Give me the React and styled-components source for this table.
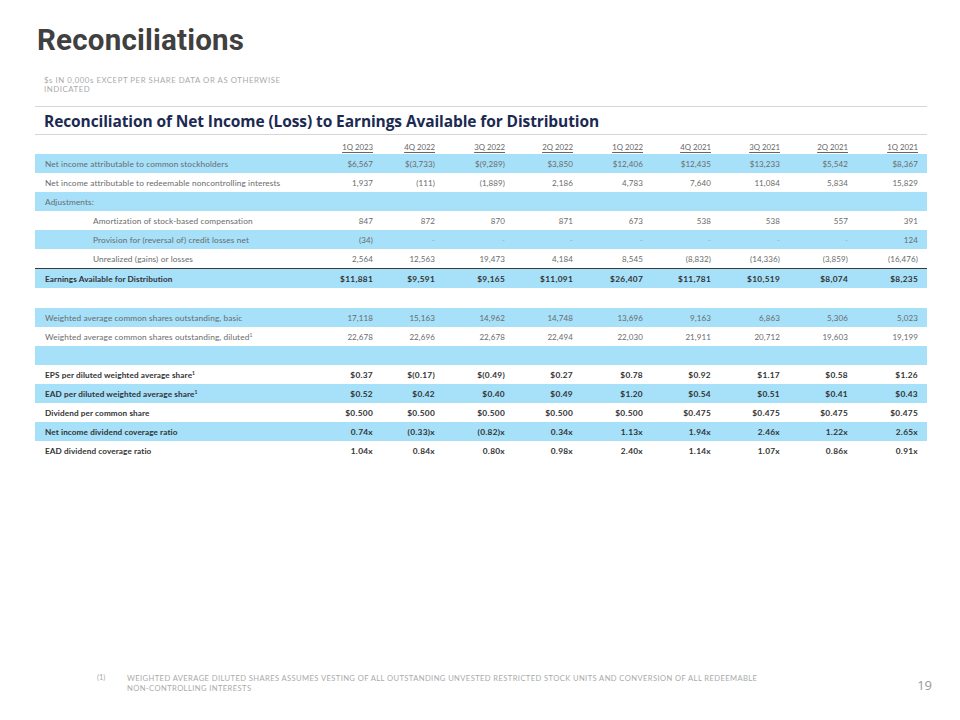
import React from "react";
import styled, { createGlobalStyle, css } from "styled-components";

const Global = createGlobalStyle`
  html, body { margin: 0; padding: 0; background: #fff; }
  * { box-sizing: border-box; }
`;

const GRID = "279px 68px 62px 70px 68px 70px 68px 69px 68px 70px";
const BLUE = "#a6e0f9";

const Page = styled.div`
  width: 960px;
  height: 720px;
  display: flex;
  flex-direction: column;
  padding: 22px 33px 0 35px;
  font-family: Lato, "Liberation Sans", sans-serif;
  background: #fff;
`;

const Title = styled.h1`
  margin: 0 0 0 2px;
  font-family: Roboto, "Liberation Sans", sans-serif;
  font-weight: 700;
  font-size: 29.5px;
  line-height: 36px;
  color: #404040;
  letter-spacing: 0.2px;
`;

const Subtitle = styled.div`
  margin: 18px 0 0 9px;
  width: 240px;
  font-size: 7.8px;
  line-height: 9px;
  color: #aaa;
  letter-spacing: 0.55px;
`;

const TableTitle = styled.div`
  margin-top: 12px;
  border-top: 1px solid #d6d6d6;
  border-bottom: 1px solid #d6d6d6;
  height: 29px;
  display: flex;
  align-items: center;
  padding-left: 9px;
  font-family: "Open Sans", "Liberation Sans", sans-serif;
  font-weight: 700;
  font-size: 15.5px;
  color: #1b2a52;
  letter-spacing: -0.1px;
`;

const Table = styled.div`
  display: flex;
  flex-direction: column;
`;

const HeaderRow = styled.div`
  display: grid;
  grid-template-columns: ${GRID};
  height: 19px;
  align-items: end;
  padding-bottom: 2px;
`;

const HeadCell = styled.div`
  text-align: right;
  padding-right: 9px;
  font-size: 7.8px;
  color: #666;
  text-decoration: underline;
  text-underline-offset: 1.5px;
`;

const Row = styled.div`
  display: grid;
  grid-template-columns: ${GRID};
  align-items: center;
  height: ${(p) => (p.$tall ? "20px" : "19px")};
  background: ${(p) => (p.$blue ? BLUE : "#fff")};
  ${(p) =>
    p.$rule &&
    css`
      border-top: 1.5px solid #3a3a3a;
    `}
`;

const Label = styled.div`
  padding-left: ${(p) => (p.$indent ? "58px" : "10px")};
  font-size: ${(p) => (p.$bold ? "8.2px" : "8.3px")};
  font-weight: ${(p) => (p.$bold ? 700 : 400)};
  color: ${(p) => (p.$bold ? "#333" : "#6b6b6b")};
  white-space: nowrap;
  letter-spacing: 0.1px;
`;

const Cell = styled.div`
  text-align: right;
  padding-right: 9px;
  font-size: ${(p) => (p.$bold ? "8.3px" : "8px")};
  font-weight: ${(p) => (p.$bold ? 700 : 400)};
  color: ${(p) => (p.$dash ? "#aaa" : p.$bold ? "#333" : "#6b6b6b")};
  letter-spacing: ${(p) => (p.$bold ? "0.3px" : "0.1px")};
  white-space: nowrap;
`;

const Sup = styled.sup`
  font-size: 5px;
  vertical-align: 3px;
  line-height: 0;
`;

const Footer = styled.div`
  margin-top: auto;
  height: 47px;
  display: flex;
  align-items: flex-start;
`;

const NoteNum = styled.div`
  margin-left: 62px;
  width: 30px;
  font-size: 7.4px;
  line-height: 10px;
  color: #aaa;
`;

const NoteText = styled.div`
  width: 645px;
  font-size: 7.6px;
  line-height: 10px;
  color: #aaa;
  letter-spacing: 0.4px;
  text-transform: uppercase;
`;

const PageNum = styled.div`
  margin-left: auto;
  margin-top: 3px;
  margin-right: -5px;
  font-size: 13px;
  color: #999;
  font-family: "Open Sans", "Liberation Sans", sans-serif;
`;

const cols = ["1Q 2023", "4Q 2022", "3Q 2022", "2Q 2022", "1Q 2022", "4Q 2021", "3Q 2021", "2Q 2021", "1Q 2021"];

const rows = [
  { label: "Net income attributable to common stockholders", blue: true, v: ["$6,567", "$(3,733)", "$(9,289)", "$3,850", "$12,406", "$12,435", "$13,233", "$5,542", "$8,367"] },
  { label: "Net income attributable to redeemable noncontrolling interests", v: ["1,937", "(111)", "(1,889)", "2,186", "4,783", "7,640", "11,084", "5,834", "15,829"] },
  { label: "Adjustments:", blue: true, v: [] },
  { label: "Amortization of stock-based compensation", indent: true, v: ["847", "872", "870", "871", "673", "538", "538", "557", "391"] },
  { label: "Provision for (reversal of) credit losses net", indent: true, blue: true, v: ["(34)", "-", "-", "-", "-", "-", "-", "-", "124"] },
  { label: "Unrealized (gains) or losses", indent: true, v: ["2,564", "12,563", "19,473", "4,184", "8,545", "(8,832)", "(14,336)", "(3,859)", "(16,476)"] },
  { label: "Earnings Available for Distribution", blue: true, bold: true, rule: true, tall: true, v: ["$11,881", "$9,591", "$9,165", "$11,091", "$26,407", "$11,781", "$10,519", "$8,074", "$8,235"] },
  { label: "", tall: true, v: [] },
  { label: "Weighted average common shares outstanding, basic", blue: true, v: ["17,118", "15,163", "14,962", "14,748", "13,696", "9,163", "6,863", "5,306", "5,023"] },
  { label: "Weighted average common shares outstanding, diluted", sup: true, v: ["22,678", "22,696", "22,678", "22,494", "22,030", "21,911", "20,712", "19,603", "19,199"] },
  { label: "", blue: true, v: [] },
  { label: "EPS per diluted weighted average share", sup: true, bold: true, v: ["$0.37", "$(0.17)", "$(0.49)", "$0.27", "$0.78", "$0.92", "$1.17", "$0.58", "$1.26"] },
  { label: "EAD per diluted weighted average share", sup: true, bold: true, blue: true, v: ["$0.52", "$0.42", "$0.40", "$0.49", "$1.20", "$0.54", "$0.51", "$0.41", "$0.43"] },
  { label: "Dividend per common share", bold: true, v: ["$0.500", "$0.500", "$0.500", "$0.500", "$0.500", "$0.475", "$0.475", "$0.475", "$0.475"] },
  { label: "Net income dividend coverage ratio", bold: true, blue: true, v: ["0.74x", "(0.33)x", "(0.82)x", "0.34x", "1.13x", "1.94x", "2.46x", "1.22x", "2.65x"] },
  { label: "EAD dividend coverage ratio", bold: true, v: ["1.04x", "0.84x", "0.80x", "0.98x", "2.40x", "1.14x", "1.07x", "0.86x", "0.91x"] },
];

export default function App() {
  return (
    <>
      <Global />
      <Page>
        <Title>Reconciliations</Title>
        <Subtitle>$s IN 0,000s EXCEPT PER SHARE DATA OR AS OTHERWISE INDICATED</Subtitle>
        <TableTitle>Reconciliation of Net Income (Loss) to Earnings Available for Distribution</TableTitle>
        <Table>
          <HeaderRow>
            <div />
            {cols.map((c) => (
              <HeadCell key={c}>{c}</HeadCell>
            ))}
          </HeaderRow>
          {rows.map((r, i) => (
            <Row key={i} $blue={r.blue} $rule={r.rule} $tall={r.tall}>
              <Label $indent={r.indent} $bold={r.bold}>
                {r.label}
                {r.sup && <Sup>1</Sup>}
              </Label>
              {cols.map((c, j) => (
                <Cell key={c} $bold={r.bold} $dash={r.v[j] === "-"}>
                  {r.v[j] || ""}
                </Cell>
              ))}
            </Row>
          ))}
        </Table>
        <Footer>
          <NoteNum>(1)</NoteNum>
          <NoteText>
            Weighted average diluted shares assumes vesting of all outstanding unvested restricted stock units and
            conversion of all redeemable non-controlling interests
          </NoteText>
          <PageNum>19</PageNum>
        </Footer>
      </Page>
    </>
  );
}
